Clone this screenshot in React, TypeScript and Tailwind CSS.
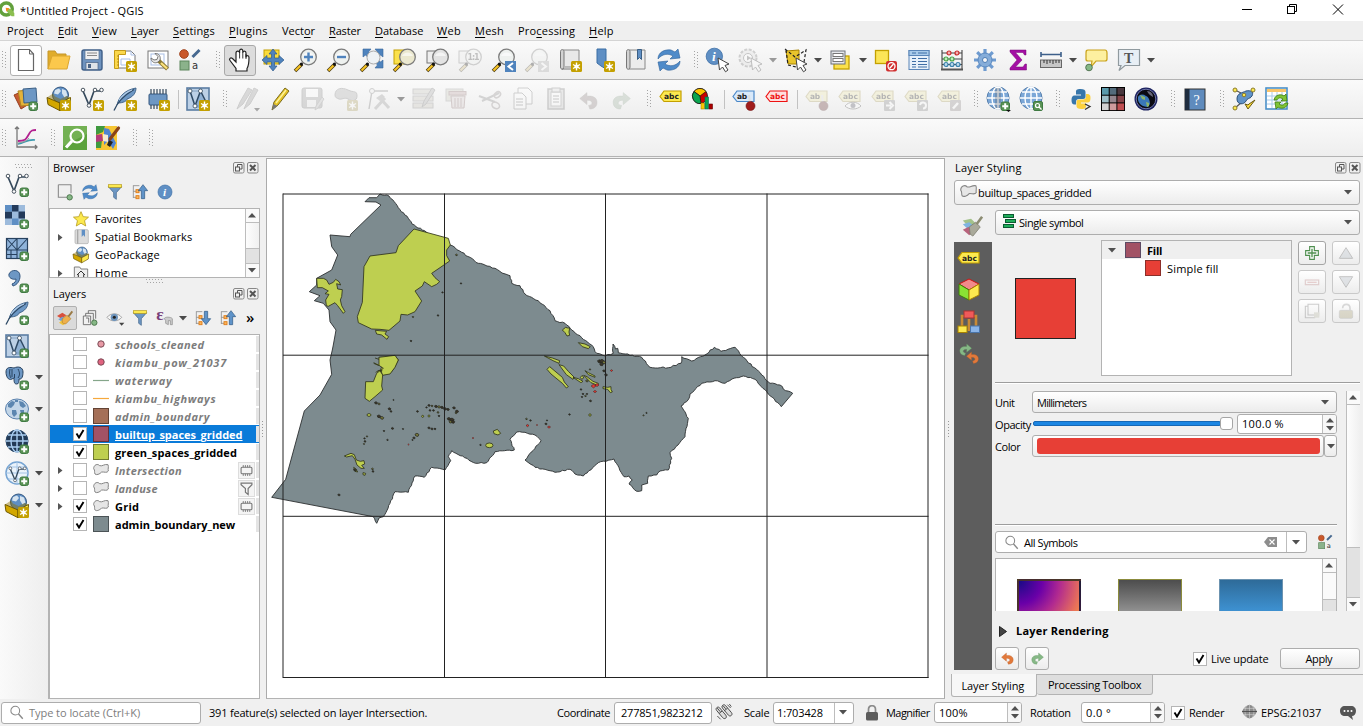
import { useLayoutEffect, useRef } from "react";
import type { ReactNode } from "react";

/* Text run fitted to a given width through letter spacing. */
function T({ w, children, className = "" }: { w: number; children: ReactNode; className?: string }) {
  const ref = useRef<HTMLSpanElement>(null);
  useLayoutEffect(() => {
    const el = ref.current;
    if (!el) return;
    el.style.letterSpacing = "0px";
    const n = (el.textContent || "").length || 1;
    el.style.letterSpacing = `${(w - el.offsetWidth) / n}px`;
  }, [w]);
  return (
    <span className="shrink-0 flex" style={{ width: w }}>
      <span ref={ref} className={`inline-block whitespace-pre ${className}`}>
        {children}
      </span>
    </span>
  );
}

function Ic({ children, s = 24, className = "" }: { children: ReactNode; s?: number; className?: string }) {
  return (
    <svg width={s} height={s} viewBox="0 0 24 24" fill="none" className={`shrink-0 overflow-visible ${className}`}>
      {children}
    </svg>
  );
}

/* ---------- shared icon fragments ---------- */
const Star = () => (
  <g>
    <rect x="13" y="13" width="11" height="11" rx="1.500" fill="#c4a000" />
    <path d="M18.500 14.500v8M15 16.500l7 4M22 16.500l-7 4" stroke="#fff" strokeWidth="1.400" />
    <circle cx="18.500" cy="18.500" r="2" fill="#fff" />
  </g>
);
const Plus = () => (
  <g>
    <rect x="15" y="15" width="8.500" height="8.500" rx="2" fill="#5a9355" stroke="#3f7a42" />
    <path d="M19.200 16.200v6M16.200 19.200h6" stroke="#fff" strokeWidth="2" />
  </g>
);
const Handle = () => (
  <g>
    <path d="M8 16L1 23" stroke="#4a3b10" strokeWidth="3.600" />
    <path d="M6.500 17.500L1.500 22.500" stroke="#f6c324" strokeWidth="2.200" />
    <circle cx="7.500" cy="16" r="1.500" fill="#111" />
  </g>
);
const Lens = ({ fill = "#eef1ef" }: { fill?: string }) => (
  <g>
    <Handle />
    <circle cx="14.500" cy="9" r="7.800" fill={fill} stroke="#7c7c7c" strokeWidth="1.300" />
    <path d="M9 8a6 6 0 0 1 11 0z" fill="#fff" opacity=".6" />
  </g>
);
const Cursor = () => <path d="M12 10l11 6-4 1.500 3 4.500-2.500 1.800-3-4.800-3 3z" fill="#fff" stroke="#444" strokeWidth="1" />;
const VNodes = () => (
  <g>
    <path d="M3 4l6 14 5-14h7" stroke="#35495c" strokeWidth="1.700" />
    <g fill="#fff" stroke="#4a5560" strokeWidth="1">
      <circle cx="3" cy="3" r="1.800" /><circle cx="9" cy="18.500" r="1.800" /><circle cx="15" cy="3" r="1.800" /><circle cx="21.500" cy="3" r="1.800" />
    </g>
  </g>
);
const Feather = () => (
  <g>
    <path d="M4 18C6 9 12 3 23 1c0 5-3 9-9 11 0 2-4 4-9 4" fill="#6d97c4" stroke="#3b5f85" strokeWidth=".9" />
    <path d="M1 23.500C4 16 10 9 21 2.500" stroke="#2e4a66" strokeWidth="1.300" />
    <path d="M6 13c3-4 7-8 13-10" stroke="#b7cfe8" strokeWidth="1.200" />
  </g>
);
const Box = () => (
  <g>
    <circle cx="13.500" cy="8" r="8" fill="#5f8fc4" stroke="#35577f" />
    <path d="M8 3l4-1.500 2 2.500-3 3.500-4-1zM15 2l4 1.500 1.500 5-3 2-2.500-4z" fill="#d5e3ef" />
    <path d="M0 10.500l6-4 2 3 5.500 2.500 6-3 4 1.500-10 6z" fill="#8c6e00" opacity=".45" />
    <path d="M0 10.500L13 16v7.700L1 17.500z" fill="#d3a700" stroke="#6f5800" />
    <path d="M13 16l10.500-5.500-.500 7.500L13 23.700z" fill="#fce94f" stroke="#6f5800" />
  </g>
);
const Globe = ({ dark = false }: { dark?: boolean }) => (
  <g>
    <circle cx="12" cy="11" r="11" fill={dark ? "#233a55" : "#7ba7d7"} stroke={dark ? "#2b4a6b" : "#5880ad"} />
    <path d="M12 0v22M1 11h22M3 5h18M3 17h18" stroke={dark ? "#a9cdf0" : "#fff"} strokeWidth="1.400" />
    <ellipse cx="12" cy="11" rx="6" ry="11" stroke={dark ? "#a9cdf0" : "#fff"} strokeWidth="1.400" />
  </g>
);
const Mesh = () => (
  <g>
    <rect x="1" y="1" width="22" height="22" fill="#bcd0e6" stroke="#5b7da3" strokeWidth="1.600" />
    <path d="M14 4l8 17H9z" fill="#8fb0d3" />
    <path d="M4 4l5 15 5.500-15L21 17" stroke="#2f4a66" strokeWidth="1.500" />
    <path d="M4 4l10 0M9 19h12" stroke="#7d9cbd" strokeWidth=".9" />
    <g fill="#fff" stroke="#35495c" strokeWidth=".8"><circle cx="4" cy="4" r="2" /><circle cx="14.500" cy="4" r="2" /><circle cx="9" cy="19" r="2" /></g>
  </g>
);
const Tag = ({ t = "abc", fill = "#fce94f", stroke = "#c4a000", color = "#222" }: { t?: string; fill?: string; stroke?: string; color?: string }) => (
  <g>
    <path d="M1 9.500L5 4h17v10.500H5z" fill={fill} stroke={stroke} strokeWidth="1.200" />
    <text x="5" y="12" fontSize="7.500" fontWeight="700" fontFamily="DejaVu Sans" fill={color} textLength={t.length > 2 ? 15 : 10}>{t}</text>
  </g>
);
const Pin = () => (
  <g>
    <path d="M17 8l1 9" stroke="#ddd" strokeWidth="2" />
    <circle cx="18.500" cy="19" r="4.500" fill="#a11d1d" stroke="#701010" strokeWidth=".6" />
  </g>
);
const RefreshG = () => (
  <g fill="#4f8bc9" stroke="#2b5f98" strokeWidth=".6">
    <path d="M1 11C1 4 8 1 14 2l4 2 3-3 2 9-10 1 3-3C11 5 5 6 1 11z" />
    <path d="M23 13c0 7-7 10-13 9l-4-2-3 3-2-9 10-1-3 3c5 3 11 2 15-3z" />
  </g>
);
const SymG = () => (
  <g>
    <circle cx="5" cy="6" r="4.300" fill="#c9582b" stroke="#a1451f" />
    <path d="M13.500 9l7-7" stroke="#46688f" strokeWidth="3" />
    <rect x="1" y="13" width="9" height="9" fill="#8bb28b" stroke="#5d865d" />
    <text x="13" y="21" fontSize="10" fill="#333" fontFamily="DejaVu Sans">a</text>
  </g>
);
const PageFold = () => (
  <g>
    <rect x="2" y="3" width="20" height="17" fill="#fff" stroke="#777" />
    <rect x="5" y="6" width="13" height="11" stroke="#a9bfe6" fill="none" />
  </g>
);
const FunnelG = () => (
  <g>
    <path d="M2 4h20l-8 9v10l-4-3v-7z" fill="#6d97c4" stroke="#3b5f85" />
    <rect x="2" y="1" width="20" height="4" fill="#fce94f" stroke="#b59a1c" />
  </g>
);
const InfoG = () => (
  <g>
    <circle cx="12" cy="12" r="10.500" fill="#5f8fc4" stroke="#3b6ea5" />
    <text x="9" y="18" fontSize="17" fontStyle="italic" fontWeight="700" fill="#fff" fontFamily="Liberation Serif">i</text>
  </g>
);
const TreeUp = ({ down = false }: { down?: boolean }) => (
  <g>
    <path d="M2 2v19M2 2.500h9M2 11h5M2 20h5" stroke="#888" strokeWidth="1.200" />
    <rect x="6" y="8.500" width="4.500" height="4.500" fill="#fbb55c" stroke="#e07f1c" strokeWidth="1.400" /><rect x="6" y="17.500" width="4.500" height="4.500" fill="#fbb55c" stroke="#e07f1c" strokeWidth="1.400" />
    <path d={down ? "M14 2h5v11h4.500l-7 9-7-9H14z" : "M14 22h5V10h4.500l-7-9-7 9H14z"} fill="#5f93c9" stroke="#2b5580" />
  </g>
);
const UndoG = ({ c = "#e2793b", s = "#b95b22" }: { c?: string; s?: string }) => (
  <path d="M1 9.500L10 2v4.500C18 5.500 23 9 22.500 15c-.500 5-4 7.500-9 7.500l-1.500-4.500c6 0 6-7-2-6.500V17z" fill={c} stroke={s} strokeWidth=".6" />
);
const RedoG = () => <g transform="matrix(-1 0 0 1 24 0)"><UndoG c="#86b886" s="#5b8f5b" /></g>;
const BrushG = () => (
  <g>
    <path d="M0 9l8-5 6 4-7 5z" fill="#d8503c" />
    <path d="M2 14l6-4 5 3-5 5z" fill="#6ea2d8" />
    <path d="M3 19l6-5 7 4-7 5z" fill="#f0c33c" />
    <path d="M8 13l7-5 6 5-8 8c-2 0-4-1-5-2z" fill="#eeb04c" stroke="#a97b2c" strokeWidth=".8" />
    <path d="M17 10l6-8" stroke="#9a7a45" strokeWidth="2.800" />
  </g>
);

/* ---------- toolbar parts ---------- */
const Dots = ({ first = false }: { first?: boolean }) => (
  <span className={first ? "w-[9.5px] shrink-0 flex justify-center" : "w-4 shrink-0 flex justify-center pl-[5px]"}>
    <svg width="5" height="18" className="shrink-0">
      {[0, 3, 6, 9, 12, 15].map((y) => (
        <g key={y} fill="#a5a5a5"><rect x="0" y={y} width="1" height="1" /><rect x="3" y={y + 1} width="1" height="1" /></g>
      ))}
    </svg>
  </span>
);
const Sep = () => <span className="w-[7px] shrink-0 flex justify-center"><span className="w-px h-[19px] bg-[#c2c2c2]" /></span>;
const Car = ({ dim = false }: { dim?: boolean }) => (
  <span className="w-3 shrink-0 flex justify-center pr-[2px]">
    <svg width="8" height="5" viewBox="0 0 8 5" className="shrink-0"><path d="M0 0h8L4 4.500z" fill={dim ? "#9a9a9a" : "#4a4a4a"} /></svg>
  </span>
);
function B({ children, off = false, box = "" }: { children: ReactNode; off?: boolean; box?: string }) {
  return (
    <span className="w-[33px] h-full shrink-0 flex items-center justify-center">
      <span className={`flex items-center justify-center w-8 h-[31px] rounded-[3px] ${box}`}>
        <Ic className={off ? "opacity-30 grayscale-[60%]" : ""}>{children}</Ic>
      </span>
    </span>
  );
}
const barCls = "h-[39px] flex items-center shrink-0 border-b border-[#b3b3b3] bg-linear-to-b from-[#fafafa] to-[#eeeeee]";

function Toolbar1() {
  return (
    <div className={barCls}>
      <Dots first />
      <B box="bg-white border border-[#b0b0b0]"><path d="M4.500 1.500h11l4 4.500v16.500h-15z" fill="#fff" stroke="#666" strokeWidth="1.200" /><path d="M15.500 1.500V6h4" stroke="#666" /></B>
      <B><path d="M1 21V3h7l2 3h9v4" fill="#e0ac2b" stroke="#c4952a" /><path d="M1 21l4-13h18l-3 13z" fill="#fbc84c" stroke="#dba62f" /></B>
      <B><rect x="2" y="2" width="20" height="20" rx="2" fill="#6f93bf" stroke="#3f5f88" strokeWidth="1.400" /><rect x="5" y="2.500" width="14" height="9" fill="#f1f1f1" stroke="#55708f" strokeWidth=".7" /><path d="M7 5h10M7 7.500h10" stroke="#888" /><rect x="6" y="14.500" width="12" height="7" fill="#dfe3e8" stroke="#4a6385" strokeWidth=".7" /><rect x="8" y="16" width="3" height="4" fill="#4a6385" /></B>
      <B><path d="M4 3h14l4 4v13H4z" fill="#fff" stroke="#777" /><path d="M18 3v4h4M8 11h9v6H8z" stroke="#a9bfe6" /><path d="M1.500 2.500h11v4h-7v14h-4z" fill="#fbd84c" stroke="#c49b17" /><path d="M4 8h2M4 11h2M4 14h2M4 17h2" stroke="#a87f0f" strokeWidth=".8" /><Star /></B>
      <B><PageFold /><path d="M12 12l9.500 9" stroke="#8d7a34" strokeWidth="4" /><path d="M15 15l6 5.500" stroke="#fbe27c" strokeWidth="2.200" /><path d="M9 5.500l3 3-1 3-3 .5-3-2c0 4 4 6 7 4l2-2c1-3-1-7-5-6.500z" fill="#e8e8e8" stroke="#777" /></B>
      <B><SymG /></B>
      <Dots />
      <B box="bg-[#dcdcdc] border border-[#a9a9a9]"><path d="M8 14L4.500 10.500c-2-1.300-3.800.3-2.500 2L8 20.500V23h11v-2.500c2-3 2-6 2-11 0-2.600-3-2.600-3 0V5c0-2.600-3.200-2.600-3.200 0V3c0-2.600-3.200-2.600-3.200 0v2c0-2.600-3.600-2.600-3.600 0z" fill="#fff" stroke="#222" strokeWidth="1.200" /><path d="M11.600 5v5.500M14.800 5v5.500M18 6v5" stroke="#222" strokeWidth=".9" /></B>
      <B><rect x="3" y="2" width="15" height="14" fill="#fbdc3c" stroke="#c4a000" /><path d="M12 1l4 5h-2.500v4H18V7.500l5 4.500-5 4.500V14h-4.500v4H16l-4 5-4-5h2.500v-4H6v2.500L1 12l5-4.500V10h4.500V6H8z" fill="#4f83bd" stroke="#2f5b8d" strokeWidth=".7" /></B>
      <B><Lens /><path d="M14.500 4.500v9M10 9h9" stroke="#4f83bd" strokeWidth="2.400" /></B>
      <B><Lens /><path d="M10 9h9" stroke="#4f83bd" strokeWidth="2.400" /></B>
      <B><path d="M3 1h8l-2.500 3 4 4-3 3-4-4L3 9zM23 1h-8l2.500 3-4 4 3 3 4-4L23 9zM23 20h-8l2.500-3-4-4 3-3 4 4 2.500-2z" fill="#4f83bd" stroke="#38669c" strokeWidth=".6" /><circle cx="13.500" cy="9.500" r="6.500" fill="#eef2f5" stroke="#aaa" /><Handle /></B>
      <B><rect x="1" y="2" width="11" height="14" fill="#fbe14c" stroke="#c4a000" /><Lens fill="#ebe8cf" /></B>
      <B><rect x="1" y="3" width="14" height="12" fill="#eee" stroke="#777" /><Lens fill="#e3e3e3" /></B>
      <B off><rect x="0" y="3" width="14" height="12" fill="#eee" stroke="#777" /><Lens /><text x="8.500" y="12" fontSize="8" fontWeight="700" fill="#444" fontFamily="DejaVu Sans" textLength="12">1:1</text></B>
      <B><Lens /><rect x="13" y="13" width="11" height="11" fill="#4f83bd" /><path d="M21 15l-4.500 3.500L21 22" stroke="#fff" strokeWidth="2" /></B>
      <B off><Lens /><rect x="13" y="13" width="11" height="11" fill="#aaa" /><path d="M16.500 15l4.500 3.500-4.500 3.500" stroke="#fff" strokeWidth="2" /></B>
      <B><path d="M5 2h16v17H7" fill="#e8e8e8" stroke="#888" /><path d="M2.500 3.500c0-2.500 3.500-2.500 3.500 0V19c0 3-3.500 3-3.500 0z" fill="#d2d2d2" stroke="#777" /><path d="M4 21h10" stroke="#777" /><Star /></B>
      <B><path d="M6 1h9v20l-5-3-4-3z" fill="#5f8fc4" stroke="#3b6ea5" /><Star /></B>
      <B><path d="M5 2h16v19H5" fill="#ececec" stroke="#888" /><path d="M2.500 3.500c0-2.500 3.500-2.500 3.500 0V19c0 3-3.500 3-3.500 0z" fill="#d2d2d2" stroke="#777" /><path d="M13.500 1.500h4v10l-2-2-2 2z" fill="#5f8fc4" stroke="#3b5f85" /></B>
      <B><RefreshG /></B>
      <Dots />
      <B><g transform="translate(-1 -1) scale(.78)"><InfoG /></g><Cursor /></B>
      <B off><circle cx="9" cy="10" r="8.500" fill="#ddd" stroke="#777" strokeWidth="2" strokeDasharray="3 1.500" /><circle cx="9" cy="10" r="4.500" fill="#fff" stroke="#555" /><path d="M8 7.500v5l4-2.500z" fill="#555" /><Cursor /></B>
      <Car dim />
      <B><path d="M2 3l13-1v14H4z" fill="#e8c52c" stroke="#a88200" /><path d="M1 1l10 8L22 2l-2 12M4 17l8 2M2 2l2 15" stroke="#222" strokeDasharray="3 2" strokeWidth="1.200" /><Cursor /></B>
      <Car />
      <B><rect x="5" y="8" width="15" height="13" fill="#fbe14c" stroke="#c4a000" strokeWidth="1.300" /><rect x="2" y="3" width="14" height="13" fill="#e6e8ec" stroke="#6c7078" /><rect x="4" y="5.500" width="10" height="3" fill="#fff" stroke="#777" /><rect x="4" y="10.500" width="10" height="3" fill="#fff" stroke="#777" /></B>
      <Car />
      <B><rect x="1.500" y="2.500" width="13" height="13" fill="#fce557" stroke="#c4a000" strokeWidth="1.300" /><rect x="12" y="13" width="11" height="10.500" rx="2" fill="#d12f2f" /><circle cx="17.500" cy="18.200" r="3.500" stroke="#fff" strokeWidth="1.300" /><path d="M15.500 20.500l4-4.500" stroke="#fff" strokeWidth="1.300" /></B>
      <B><rect x="2" y="2.500" width="20" height="19" fill="#e8f1fa" stroke="#5b86b8" /><rect x="2" y="2.500" width="20" height="5" fill="#a9cbea" stroke="#5b86b8" /><path d="M5 10.500h4M11 10.500h9M5 13.500h4M11 13.500h9M5 16.500h4M11 16.500h9M5 19h4M11 19h9M5 5h4M11 5h9" stroke="#3f6ea5" /></B>
      <B><path d="M2 2v19M22 2v19M2 5h20M2 11h20M2 16.500h20" stroke="#444" strokeWidth="1.100" /><path d="M1 21.500h22" stroke="#555" strokeWidth="2" /><g strokeWidth="1.200"><g fill="#f2b0b0" stroke="#cc2b2b"><circle cx="9" cy="5" r="2" /><circle cx="17" cy="5" r="2" /></g><g fill="#bdeabd" stroke="#4aa64a"><circle cx="6" cy="11" r="2" /><circle cx="12" cy="11" r="2" /></g><g fill="#bdd9ea" stroke="#3a82ad"><circle cx="6" cy="16.500" r="2" /><circle cx="12" cy="16.500" r="2" /><circle cx="18" cy="16.500" r="2" /></g></g></B>
      <B><g stroke="#6e9bd0" strokeWidth="3.200"><path d="M12 1v22M1 12h22M4.200 4.200l15.600 15.600M19.800 4.200L4.200 19.800" /></g><circle cx="12" cy="12" r="7" fill="#86add9" stroke="#5a89c0" /><circle cx="12" cy="12" r="2.500" fill="#f7f7f7" stroke="#4d7db5" /></B>
      <B><path d="M4 2h16v5h-1.500L17 4.500H9.500L16 12l-6.500 7H17l2-3h1.500v6H4v-2l7-8-7-8z" fill="#a40ea4" stroke="#760976" strokeWidth=".5" /></B>
      <B><path d="M2 6.500h20M2 4v5M22 4v5" stroke="#3d5f8a" strokeWidth="1.600" /><rect x="1.500" y="12" width="21" height="7.500" fill="#c6c6c6" stroke="#666" /><path d="M5 12v3M8 12v4M11 12v3M14 12v4M17 12v3M20 12v3" stroke="#333" /></B>
      <Car />
      <B><path d="M4 2h17c2 0 2 1 2 3v6c0 2-1 2-2 2h-9l-5 6 1-6H4c-2 0-2-1-2-2V5c0-2 0-3 2-3z" fill="#fdf0a0" stroke="#c9a21a" strokeWidth="1.200" /><circle cx="5" cy="19.500" r="3.300" fill="#86b886" stroke="#557755" /></B>
      <B><path d="M1.500 1.500h21v16H8l-6 5 2-5H1.500z" fill="#e8eff5" stroke="#909a9f" strokeWidth="1.200" /><text x="7" y="14.500" fontSize="14" fontWeight="700" fill="#555" fontFamily="Liberation Serif">T</text></B>
      <Car />
    </div>
  );
}

function Toolbar2() {
  return (
    <div className={barCls}>
      <Dots first />
      <B><path d="M0 8l9-4 6 13-8 5z" fill="#c75b32" stroke="#96401f" /><path d="M4 4l12-1 2 15-11 1z" fill="#e3b23a" stroke="#b08420" /><path d="M9 2l13-1 1 14-13 1z" fill="#6d97c4" stroke="#3b5f85" /><Plus /></B>
      <B><Box /><Star /></B>
      <B><VNodes /><Star /></B>
      <B><Feather /><Star /></B>
      <B><rect x="3" y="7" width="18" height="11" rx="1" fill="#6d97c4" stroke="#35577f" /><path d="M5 2v5M8 2v5M11 2v5M14 2v5M17 2v5M20 2v5M5 18v4M8 18v4M11 18v4" stroke="#35495c" strokeWidth="1.200" /><Star /></B>
      <Sep />
      <B><Mesh /><Star /></B>
      <Dots />
      <B off><path d="M2 22l3-7L13 1l4 2-9 14zM9 22l3-7L19 1l4 2-8 14z" fill="#999" stroke="#777" /><path d="M19 21h6l-3 3.500z" fill="#000" /></B>
      <B><path d="M4 23l2-8L17 1l4 3-11 14z" fill="#e5c326" stroke="#7a6a1c" /><path d="M8 16L18 3" stroke="#fdf39b" strokeWidth="1.500" /><path d="M4 23l1.500-6 4 2z" fill="#777" /></B>
      <B off><rect x="1" y="1" width="20" height="20" rx="2" fill="#999" stroke="#777" /><rect x="5" y="2" width="12" height="8" fill="#fff" /><rect x="6" y="13" width="9" height="7" fill="#eee" /><path d="M14 23l1-4 6-9 2 2-6 9z" fill="#bbb" stroke="#888" /></B>
      <B off><path d="M1 8C1 1 8 0 14 3s9 0 9 6-6 5-9 3-7 1-9 0-4-1-4-4z" fill="#aaa" stroke="#777" /><Star /></B>
      <B off><path d="M2 22L5 4l16 0" stroke="#777" strokeWidth="1.400" /><circle cx="5" cy="4" r="2.500" fill="#eee" stroke="#777" /><path d="M8 22L18 11M12 10l10 11" stroke="#999" strokeWidth="3" /><path d="M9 11l6-4 3 3-5 4z" fill="#999" /></B>
      <Car dim />
      <B off><rect x="1" y="2" width="20" height="5" fill="#cdc5ae" stroke="#888" /><rect x="1" y="9" width="20" height="5" fill="#cdc5ae" stroke="#888" /><rect x="1" y="16" width="20" height="5" fill="#cdc5ae" stroke="#888" /><path d="M10 20l2-6 8-13 3 2-9 14z" fill="#aaa" stroke="#777" /></B>
      <B off><rect x="1" y="2" width="17" height="12" fill="#cca" stroke="#999" /><rect x="4" y="4.500" width="17" height="3.500" fill="#d99" stroke="#a66" /><path d="M6 9h14l-1 12H7z" fill="#e3caca" stroke="#a66" /><path d="M10 11v9M13 11v9M16 11v9" stroke="#a66" /></B>
      <B off><path d="M1 9l16 6M4 14L21 6" stroke="#888" strokeWidth="2" /><ellipse cx="18" cy="18.500" rx="4" ry="3" stroke="#988" strokeWidth="1.600" transform="rotate(30 18 18)" /><ellipse cx="19.500" cy="8" rx="3.500" ry="2.500" stroke="#988" strokeWidth="1.600" transform="rotate(-40 19 8)" /></B>
      <B off><path d="M7 1h10l4 4v12H7z" fill="#fff" stroke="#777" /><path d="M3 6h8l4 4v12H3z" fill="#fff" stroke="#777" /><path d="M5 12h7M5 15h7M5 18h7" stroke="#666" /></B>
      <B off><rect x="4" y="2" width="16" height="20" fill="#ccc" stroke="#777" strokeWidth="1.500" /><rect x="7" y="5" width="10" height="14" fill="#fff" stroke="#888" /><rect x="8" y="1" width="8" height="4" fill="#ddd" stroke="#777" /><path d="M9 9h6M9 12h6M9 15h6" stroke="#666" /></B>
      <B off><g transform="translate(2 4) scale(.8)"><UndoG c="#a08080" s="#776" /></g></B>
      <B off><g transform="translate(2 4) scale(.8)"><RedoG /></g></B>
      <Dots />
      <B><Tag /></B>
      <B><circle cx="8" cy="9" r="7.500" fill="#c00" stroke="#111" strokeWidth=".8" /><path d="M8 9L2 4.500A7.500 7.500 0 0 1 14 4.500z" fill="#fbc500" stroke="#111" strokeWidth=".7" /><path d="M8 9L2 4.500A7.500 7.500 0 0 0 9 16.500z" fill="#0aa550" stroke="#111" strokeWidth=".7" /><rect x="9" y="16" width="3.500" height="6" fill="#fbc500" stroke="#a88200" strokeWidth=".6" /><rect x="13" y="10" width="3.500" height="12" fill="#0aa550" stroke="#066" strokeWidth=".6" /><rect x="17" y="17" width="3.500" height="5" fill="#a00" stroke="#600" strokeWidth=".6" /></B>
      <Sep />
      <B><Tag t="ab" fill="#d9e9fa" stroke="#4a88c8" /><Pin /></B>
      <B><Tag fill="#fdd" stroke="#e11" color="#e11" /></B>
      <Sep />
      <B off><Tag t="ab" /><Pin /></B>
      <B off><Tag /><path d="M7 19c4-5 12-5 16 0-4 4-12 4-16 0z" fill="#fff" stroke="#555" /><circle cx="15" cy="18.500" r="2.500" fill="#557" /></B>
      <B off><Tag /><rect x="13" y="13" width="11" height="11" rx="1" fill="#888" /><path d="M15 18.500h5M18.500 15l3.500 3.500-3.500 3.500" stroke="#fff" strokeWidth="2" /></B>
      <B off><Tag /><rect x="13" y="13" width="11" height="11" rx="1" fill="#888" /><path d="M16 18a3 3 0 1 1 3 3.500" stroke="#fff" strokeWidth="2" /></B>
      <B off><Tag /><rect x="13" y="13" width="11" height="11" rx="1" fill="#988" /><path d="M16 21.500l5-5.500" stroke="#fff" strokeWidth="2.500" /></B>
      <Dots />
      <B><Globe /><path d="M9 1h6v20H9z" fill="#555" opacity=".25" /><Plus /><path d="M20 23h5l-2.500 2z" fill="#111" /></B>
      <B><Globe /><rect x="14.500" y="14.500" width="9" height="9" rx="1.500" fill="#5a9355" stroke="#3f7a42" /><circle cx="18.500" cy="18.500" r="2" stroke="#fff" strokeWidth="1.200" /><path d="M20 20l2.500 2.500" stroke="#fff" strokeWidth="1.300" /></B>
      <Dots />
      <B><g transform="translate(1.500 0)"><path d="M11 2c-4 0-4.500 1-4.500 3v2.500h5v1H5c-2 0-3 1.500-3 4.500s1 4.500 3 4.500h1.500v-2.500c0-2 1-3 3-3h4c2 0 2.500-1 2.500-2.500V5c0-2-1.500-3-5-3z" fill="#3776ab" /><path d="M12 22c4 0 4.500-1 4.500-3v-2.500h-5v-1H18c2 0 3-1.500 3-4.500s-1-4-3-4h-1.500v2.500c0 2-1 3-3 3h-4c-2 0-2.500 1-2.500 2.500V19c0 2 1.500 3 5 3z" fill="#fcd13e" /></g><path d="M17 17l5 2.500-5 3" stroke="#333" strokeWidth="1.300" /></B>
      <B><rect width="24" height="24" fill="#000" />{["#5a9aab", "#536b7b", "#49373e", "#9dbfc8", "#94858d", "#874449", "#d1d1d1", "#cf9b9d", "#c04f52"].map((c, i) => <rect key={c} x={1 + (i % 3) * 7.7} y={1 + Math.floor(i / 3) * 7.7} width="6.700" height="6.700" fill={c} />)}</B>
      <B><circle cx="12" cy="12" r="11.500" fill="#1c2260" /><circle cx="12" cy="12" r="9.800" fill="#0a0a12" stroke="#6d74a8" /><path d="M4 10c2-3 5-3 8-1 3 1 4 5 4 8l-2 3C8 20 3 16 4 10z" fill="#3b78b8" /><path d="M6 8l5 2 0 3-3-1zM12 15l3 1v3l-2 1z" fill="#8db56a" /><path d="M13 4c4 0 6 3 6 6-2-1-5-3-6-6z" fill="#8f8fa6" opacity=".7" /></B>
      <Dots />
      <B><rect x="2" y="2" width="20" height="21" fill="#5f8bbd" stroke="#333" /><rect x="2" y="2" width="4.500" height="21" fill="#1e2c3e" /><text x="10.500" y="17.500" fontSize="14" fill="#fff" fontFamily="Liberation Serif">?</text></B>
      <Dots />
      <B><path d="M3 3l6 3M21 3l-3 8M3 21l7-6" stroke="#555" strokeWidth="1.200" /><path d="M5 12c0-6 5-6 9-8 5-1 8 1 6 5-2 3-5 2-6 5-2 4-9 4-9-2z" fill="#6193c7" stroke="#2d517a" /><g fill="#fce94f" stroke="#8a7a2c"><circle cx="3" cy="3" r="2" /><circle cx="21" cy="3" r="2" /><circle cx="3" cy="21" r="2" /><circle cx="12" cy="8" r="1.800" /></g><path d="M13 17l3 5 7-9-6 4-1 1z" fill="#fbdc3c" stroke="#6a5a10" /></B>
      <B><rect x="1" y="1" width="21" height="21" fill="#fff" stroke="#4a90c8" strokeWidth="1.600" /><rect x="2" y="2" width="19" height="3" fill="#f9c56b" /><path d="M2 9h19M2 13h19M2 17h19M7 5v16M12 5v16M17 5v16" stroke="#a9cbea" /><path d="M9 13c1-6 8-6 10-4l2-2 1 7h-6l2-2c-3-2-5-1-6 1zM23 16c-1 6-8 6-10 4l-2 2-1-7h6l-2 2c3 2 5 1 6-1z" fill="#7fc435" stroke="#3e7d12" strokeWidth=".8" /></B>
    </div>
  );
}

function Toolbar3() {
  return (
    <div className="h-[38px] flex items-center shrink-0 border-b border-[#b3b3b3] bg-linear-to-b from-[#fafafa] to-[#eeeeee]">
      <Dots first />
      <B><path d="M3 1v20h20M1 3l2-2 2 2M21 19l2 2-2 2" stroke="#777" strokeWidth="1.300" /><path d="M4 15c8 0 8-2 11-7 2-4 4-4 7-4" stroke="#b2218f" strokeWidth="1.800" /><path d="M4 18c7-1 9-5 17-4" stroke="#3a9aae" strokeWidth="1.600" /><path d="M4 17c6-1 9-2 11-5" stroke="#999" /></B>
      <Dots />
      <B><rect width="24" height="24" fill="#5ba23c" /><path d="M0 0h24v8L0 20z" fill="#83bb62" opacity=".6" /><circle cx="14" cy="10" r="6.500" stroke="#fff" strokeWidth="2.200" /><path d="M9 15l-6 6.500" stroke="#fff" strokeWidth="3.200" /></B>
      <B><rect width="21" height="24" fill="#f6c634" /><path d="M0 0h9l-2 6-7 3zM0 13l6 1-1 8H0z" fill="#3f9a3f" /><path d="M8 2l5 1 7 14-3 6-5-8-4 4z" fill="#4f83d1" /><path d="M0 9l6-1 1 7-7 1z" fill="#b53a7a" /><path d="M7 8l5 1v7l-5-1z" fill="#f5ead2" /><path d="M11 19l2-5 4 2-3 5z" fill="#222" /><path d="M14 13l8.500-11" stroke="#8a4318" strokeWidth="3.200" strokeLinecap="round" /></B>
      <Dots /><Dots />
    </div>
  );
}

function SideBar() {
  const items: [ReactNode, boolean][] = [
    [<><VNodes /><Plus /></>, false],
    [<><rect x="0" y="0" width="20" height="20" fill="#9dbbdc" /><g fill="#233a5a"><rect x="7" y="0" width="6.500" height="6.500" /><rect x="0" y="6.500" width="7" height="7" /><rect x="13.500" y="6.500" width="6.500" height="7" /></g><g fill="#5f8fc4"><rect x="0" y="0" width="7" height="6.500" /><rect x="7" y="13.500" width="6.500" height="6.500" /></g><Plus /></>, false],
    [<><rect x="1.500" y="1.500" width="21" height="20" fill="#8fb3da" stroke="#28425f" strokeWidth="1.200" /><path d="M1.500 13h21M12 1.500v20M1.500 1.500L12 13M12 1.500L1.500 13M12 13L22.500 1.500M1.500 17.500H12M6 13v8" stroke="#28425f" strokeWidth="1.100" /><Plus /></>, false],
    [<><path d="M4 5c2-5 11-5 11 2 0 5-3 9-7 10l-1-2c3-1 4-3 4-5-3 1-8-1-7-5z" fill="#6d97c4" stroke="#35577f" /><Plus /></>, false],
    [<><Feather /><Plus /></>, false],
    [<><Mesh /><Plus /></>, false],
    [<><path d="M1 6c0-5 4-5 8-4 4-2 9-1 9 4 0 4-1 7-3 7h-1c0 3 0 5-2.500 5S9 15 9 12l-2 1c-4 2-6-3-6-7z" fill="#6d97c4" stroke="#28425f" /><path d="M5 3c-1 4 0 8 1 9M13 3c2 4 2 6 0 9M9.500 8v4M7 3v8" stroke="#28425f" /><Plus /></>, true],
    [<><ellipse cx="12" cy="11" rx="11.500" ry="10" fill="#c3d6e8" stroke="#5880ad" /><path d="M3 6l4-3 3 1-1 3-3 3-3-1zM14 3l4 1 3 4-3 2-3-2zM7 12l4 0 1 4-3 3-2-3zM15 12l4 0 0 3-3 1zM10 2h3v2h-3z" fill="#5c86b0" /><Plus /></>, true],
    [<><Globe dark /><Plus /></>, false],
    [<><circle cx="12" cy="11" r="11" fill="#eaf3fb" stroke="#77a5d3" strokeWidth="1.500" /><path d="M12 0v22M1 11h22M3 5h18M3 17h18" stroke="#9dc0e3" strokeWidth=".9" /><g transform="translate(3 4) scale(.78)"><VNodes /></g><Plus /></>, true],
    [<><Box /><Star /></>, true],
  ];
  return (
    <div className="w-[49px] shrink-0 border-r border-[#b3b3b3] bg-linear-to-r from-[#fafafa] to-[#eeeeee] flex flex-col">
      <div className="h-3 flex items-end justify-center pb-[1px]"><HDots /></div>
      {items.map(([n, c], i) => (
        <div key={i} className="h-[32.1px] flex items-center pl-[5px] gap-[5px]">
          <Ic>{n}</Ic>
          {c && <Car />}
        </div>
      ))}
    </div>
  );
}
const HDots = () => (
  <svg width="18" height="4">{[0, 3, 6, 9, 12, 15].map((x) => <g key={x} fill="#a5a5a5"><rect x={x} y="0" width="1" height="1" /><rect x={x + 1} y="3" width="1" height="1" /></g>)}</svg>
);
const VDots = () => (
  <svg width="4" height="18">{[0, 3, 6, 9, 12, 15].map((y) => <rect key={y} x="1" y={y} width="1" height="1" fill="#999" />)}</svg>
);

function DockTitle({ t, w }: { t: string; w: number }) {
  return (
    <div className="h-[22px] shrink-0 flex items-center pl-1 pr-[2px]">
      <T w={w}>{t}</T>
      <span className="flex-1" />
      <svg width="26" height="12" viewBox="0 0 26 12" fill="none" stroke="#555">
        <rect x=".5" y=".5" width="10.500" height="10.500" rx="1.500" stroke="#888" /><rect x="2.500" y="5" width="4" height="4" /><path d="M4.500 5V2.500H9V7H6.500" />
        <rect x="14.500" y=".5" width="10.500" height="10.500" rx="1.500" stroke="#888" /><path d="M17 3l5.500 5.500M22.500 3L17 8.500" strokeWidth="2" />
      </svg>
    </div>
  );
}
const TriR = () => <svg width="5" height="7" viewBox="0 0 5 7"><path d="M0 0l4.500 3.500L0 7z" fill="#555" /></svg>;
const Arrow = ({ up = false }: { up?: boolean }) => (
  <svg width="8" height="5" viewBox="0 0 8 5" className="shrink-0"><path d={up ? "M0 4.500h8L4 0z" : "M0 0h8L4 4.500z"} fill="#505050" /></svg>
);
function Scroll({ thumb, cls }: { thumb: string; cls: string }) {
  return (
    <div className={`shrink-0 flex flex-col bg-[#e2e2e2] border-l border-[#bdbdbd] ${cls}`}>
      <div className="h-[14px] shrink-0 bg-[#fafafa] border-b border-[#bdbdbd] flex items-center justify-center pr-px"><Arrow up /></div>
      <div className={`bg-linear-to-r from-[#fdfdfd] to-[#f0f0f0] border-b border-[#bdbdbd] ${thumb}`} />
      <div className="flex-1" />
      <div className="h-[14px] shrink-0 bg-[#fafafa] border-t border-[#bdbdbd] flex items-center justify-center pr-px"><Arrow /></div>
    </div>
  );
}
const PolyG = () => <path d="M1 10C1 4 7 2 10 5.500 14 7 17 2.500 22.500 4c1.500 4-.5 6 .5 9.500-2 3.500-6 1-10 1.500-3 3.500-8 5-10 3-1.500-3 .5-5-2-8z" fill="#e6e6e6" stroke="#858585" strokeWidth="1.500" />;

function BrowserDock() {
  return (
    <>
      <DockTitle t="Browser" w={42} />
      <div className="h-[26px] mb-[3px] flex items-center shrink-0 pl-[8px] gap-[9px]">
        <Ic s={16}><path d="M2 1h19v13M2 1v19h13" stroke="#888" strokeWidth="1.600" /><circle cx="19" cy="20" r="4" fill="#86b886" stroke="#4f7a4f" strokeWidth="1.500" /></Ic>
        <Ic s={16}><RefreshG /></Ic>
        <Ic s={16}><FunnelG /></Ic>
        <Ic s={16}><TreeUp /></Ic>
        <Ic s={16}><InfoG /></Ic>
      </div>
      <div className="h-[70px] w-[211px] shrink-0 border border-[#b3b3b3] bg-white flex overflow-hidden">
        <div className="flex-1 pt-px overflow-hidden">
          {([
            ["Favorites", 47, false, <path d="M12 1l3.300 7.500 8 .7-6 5.300 1.800 8L12 18.300 4.900 22.500l1.800-8-6-5.300 8-.7z" fill="#fce94f" stroke="#b59a1c" strokeWidth="1.200" />],
            ["Spatial Bookmarks", 97, true, <><rect x="3" y="1" width="20" height="21" rx="2" fill="#dcdcdc" stroke="#aaa" /><path d="M7 1v21" stroke="#aaa" strokeWidth="2" /><path d="M13 1h5v11l-2.500-3L13 12z" fill="#5f8fc4" /></>],
            ["GeoPackage", 65, false, <Box />],
            ["Home", 33, true, <><path d="M2 3h8l2 3h10v17H2z" fill="#eee" stroke="#777" strokeWidth="1.400" /><path d="M6 15l6-6 6 6M8 14v7h8v-7" stroke="#333" strokeWidth="1.500" /></>],
          ] as [string, number, boolean, ReactNode][]).map(([t, w, a, ic]) => (
            <div key={t} className="h-[18px] flex items-center pl-[8px]">
              <span className="w-[15px] flex">{a && <TriR />}</span>
              <Ic s={16}>{ic}</Ic>
              <span className="w-[6px]" />
              <T w={w}>{t}</T>
            </div>
          ))}
        </div>
        <Scroll cls="w-[14px]" thumb="h-[26px]" />
      </div>
      <div className="h-[5px] shrink-0 flex items-center justify-center pr-[1px]"><HDots /></div>
    </>
  );
}

type Row = { t: string; w: number; on?: boolean; tri?: boolean; kind: string; end?: string; sel?: boolean };
const rows: Row[] = [
  { t: "schools_cleaned", w: 89, kind: "p1" },
  { t: "kiambu_pow_21037", w: 112, kind: "p2" },
  { t: "waterway", w: 57, kind: "l1" },
  { t: "kiambu_highways", w: 101, kind: "l2" },
  { t: "admin_boundary", w: 95, kind: "#a57058" },
  { t: "builtup_spaces_gridded", w: 128, kind: "#a25265", on: true, sel: true },
  { t: "green_spaces_gridded", w: 122, kind: "#becf50", on: true },
  { t: "Intersection", w: 67, kind: "poly", tri: true, end: "chip" },
  { t: "landuse", w: 43, kind: "poly", tri: true, end: "fun" },
  { t: "Grid", w: 24, kind: "poly", tri: true, on: true, end: "chip" },
  { t: "admin_boundary_new", w: 120, kind: "#7d8b8f", on: true },
];
const Check = ({ on = false }: { on?: boolean }) => (
  <span className="w-[14px] h-[14px] shrink-0 bg-white border border-[#b5b5b5] flex items-center justify-center">
    {on && <svg width="10" height="10" viewBox="0 0 10 10"><path d="M1.500 4.500l2.500 4L8.500 1" stroke="#000" strokeWidth="1.900" fill="none" /></svg>}
  </span>
);
function LayerSym({ k }: { k: string }) {
  if (k === "p1" || k === "p2") return <svg width="16" height="16"><circle cx="8" cy="8" r="3.200" fill={k === "p1" ? "#e89aa5" : "#e0627f"} stroke="#7a4a55" /></svg>;
  if (k === "l1" || k === "l2") return <svg width="16" height="16"><path d="M0 8.500h16" stroke={k === "l1" ? "#85a68a" : "#f6a83c"} strokeWidth="1.200" /></svg>;
  if (k === "poly") return <Ic s={16}><PolyG /></Ic>;
  return <span className="w-4 h-4 border border-black/40" style={{ backgroundColor: k }} />;
}
function LayersDock() {
  return (
    <>
      <DockTitle t="Layers" w={33} />
      <div className="h-[26px] mb-[3px] flex items-center shrink-0 pl-[4px]">
        <span className="w-6 h-6 rounded-[2px] border border-[#b0b0b0] bg-[#dadada] flex items-center justify-center"><Ic s={16}><BrushG /></Ic></span>
        <span className="w-[25px] pl-[5px]"><Ic s={16}><path d="M2 9h11v13H2zM5.500 9V5H17v11M9.500 5V1h11v12M6 12h4v7" stroke="#666" strokeWidth="1.300" /><circle cx="18.500" cy="19" r="4" fill="#86b886" stroke="#4f7a4f" strokeWidth="1.500" /></Ic></span>
        <span className="w-[25px] pl-[5px]"><Ic s={16}><path d="M0 11C5 4 17 4 22 11c-5 7-17 7-22 0z" fill="#f5f5f5" stroke="#999" strokeWidth="1.300" /><circle cx="11" cy="11" r="5.500" fill="#6d94bd" /><circle cx="11" cy="11" r="2.300" fill="#222" /><path d="M18 19h8l-4 4.500z" fill="#444" /></Ic></span>
        <span className="w-[25px] pl-[5px]"><Ic s={16}><FunnelG /></Ic></span>
        <span className="w-[24px] pl-[5px]"><Ic s={16}><text x="-1" y="15" fontSize="26" fontWeight="700" fontFamily="Liberation Serif" fill="#77407a">ε</text><path d="M11 13c0-3 10-3 12 0v9h-3v-6h-3v6l-4-2v-4z" fill="#ccc" stroke="#888" /></Ic></span>
        <span className="w-[16px] pl-[2px]"><Car /></span>
        <span className="w-[25px] pl-[3px]"><Ic s={16}><TreeUp down /></Ic></span>
        <span className="w-[22px] pl-[3px]"><Ic s={16}><TreeUp /></Ic></span>
        <span className="pl-[7px] pb-[2px] text-[15px] leading-4 font-semibold">»</span>
      </div>
      <div className="flex-1 w-[211px] border border-[#b3b3b3] bg-white">
        {rows.map((r) => (
          <div key={r.t} className={`h-[18px] flex items-center pl-[8px] ${r.sel ? "bg-[#0a7bd9] text-white" : r.on ? "text-black" : "text-[#7c7c7c]"}`}>
            <span className="w-[15px] flex">{r.tri && <TriR />}</span>
            <Check on={r.on} />
            <span className="w-[6px]" />
            <LayerSym k={r.kind} />
            <span className="w-[6px]" />
            <T w={r.w} className={`mt-[2px] font-bold ${r.on ? "" : "italic"} ${r.sel ? "underline" : ""}`}>{r.t}</T>
            <span className="flex-1" />
            {r.end && (
              <span className="w-[17px] h-[17px] mr-px border border-[#ddd] bg-[#f4f4f4] flex items-center justify-center">
                <Ic s={13}>{r.end === "chip" ? <><rect x="2" y="6" width="20" height="12" rx="2" stroke="#777" strokeWidth="2" /><path d="M6 2v4M10 2v4M14 2v4M18 2v4M6 18v4M10 18v4M14 18v4M18 18v4" stroke="#777" strokeWidth="1.700" /></> : <path d="M2 2h20v3l-7 7v11l-5-4v-7L2 5z" stroke="#777" strokeWidth="2.200" />}</Ic>
              </span>
            )}
            <span className="w-[3px] h-4 bg-[#e4e4e4]" />
          </div>
        ))}
      </div>
    </>
  );
}

/* ---------- map ---------- */
type P = [number, number];
function jag(pts: P[], amp: number): P[] {
  const out: P[] = [];
  for (let i = 0; i < pts.length - 1; i++) {
    const [x0, y0] = pts[i];
    const [x1, y1] = pts[i + 1];
    const d = Math.hypot(x1 - x0, y1 - y0);
    const n = Math.max(1, Math.round(d / 2.5));
    out.push([x0, y0]);
    for (let k = 1; k < n; k++) {
      const o = Math.sin((i * 7 + k) * 12.9898 * (k + 1)) * amp;
      out.push([x0 + ((x1 - x0) * k) / n - ((y1 - y0) / d) * o, y0 + ((y1 - y0) * k) / n + ((x1 - x0) / d) * o]);
    }
  }
  out.push(pts[pts.length - 1]);
  return out;
}
const northEast: P[] = [[380, 194], [389, 196], [398.3, 207.7], [408.3, 218.3], [412, 224], [422.3, 230], [450.3, 245], [461.7, 252.3], [478.3, 263.3], [487, 266], [495, 268.3], [502, 273], [508, 275], [510, 275.7], [511.7, 283.3], [520, 285.7], [525, 294], [538.3, 300.7], [550, 310.7], [555, 320.7], [565, 323.3], [571.7, 330], [591.7, 345], [596.7, 353.3], [605, 356], [613.3, 353.3], [613, 344], [615.5, 349], [617.7, 348.3], [618.3, 352.7], [641.7, 357.3], [650, 367.3], [668.3, 367.7], [681, 363.3], [681.7, 356.7], [691.7, 361], [705, 355], [714.3, 347.3], [721, 351.3], [735, 347.3], [743.3, 357.3], [761.7, 375], [770, 383.3], [780, 385], [785.7, 390.7], [792.7, 393.3]];
const south: P[] = [[781.3, 406.7], [766.7, 391.7], [755, 379.3], [743.3, 376], [732, 379], [725, 383.3], [715, 380.7], [701.7, 383.3], [690, 394], [688, 400], [681, 406], [688.3, 418.3], [685, 436.7], [678, 445], [670, 452.7], [671.7, 458.3], [668.3, 470], [660, 471], [656.7, 475], [648.3, 476], [647.7, 483.3], [641.7, 485], [641.7, 490.7], [636.7, 491.3], [629, 484], [632.3, 480], [629, 476], [624, 476.7], [614, 459], [598.3, 462.7], [583.3, 476], [575, 474], [570, 469.3], [555, 472.3], [535, 467.3], [525, 460], [541, 440.7], [535, 435], [525, 432.3], [516.7, 432], [510, 439.3], [514.3, 450], [495, 451.7], [486.7, 462.7], [475.7, 463.3], [451.7, 450.7], [448.3, 456.7], [450.7, 460.7], [445, 470], [431.7, 467.3], [424.3, 477.3], [415, 476], [408.3, 492.3], [395, 491.7], [390, 503.3], [383.3, 516.7], [379, 518], [376.7, 523.3], [373.3, 516.7]];
const west: P[] = [[271.7, 497.3], [285.7, 479.3], [304.3, 411], [320, 395], [331.7, 374.3], [330, 360], [332.3, 350], [333.3, 345], [336, 330], [330, 321.7], [329, 310], [323.3, 303.3], [314.3, 300.7], [320, 295.7], [309.3, 291.7], [316.7, 285], [316.7, 278.3], [331.7, 270], [337.7, 255], [331.7, 246.7], [330, 235], [350, 236.7], [350.7, 234.3], [381, 205], [376, 202], [365, 201.7], [369, 197.7], [376.7, 197.7]];
const outline = [...jag(northEast, 0.6), ...jag(south, 0.5), ...west].map((p) => p.join(",")).join(" ");

/* Small built-up patches: x, y, radius. */
const specks: [number, number, number][] = [
  [456.5, 255, 1], [461, 283.5, .8], [442.5, 292.5, .8], [438, 315.5, .9], [413, 317, .8], [411, 341, .9], [393.5, 400, .6], [376, 403, 1.5], [379, 404, 1.2], [389.5, 409, 1.4], [391, 411.5, 1], [379, 416.5, 1.8], [382, 418, 1.8], [392.5, 428.5, 1.2], [403, 429, .7], [384, 431, .8], [367, 436.5, .8], [364.5, 438.5, .8], [365, 441.5, 1], [387.5, 440, .8], [364, 444, .7], [417.5, 411.5, 1], [426.5, 407.500, .8], [429, 405.5, 1.200], [432, 406, 1], [430, 410.500, 1], [433.500, 410.500, 1], [436, 406.5, 1.5], [439, 407, 1.5], [442, 407.5, 1.5], [445, 409, 1.6], [448, 409.5, 1.4], [438, 412.500, 1], [439, 416, .9], [454, 408, 1.4], [457, 411.500, 1.6], [456, 413, 1], [449, 419, 1.8], [452, 420, 2.2], [453, 422, 1.8], [450.500, 422, 1.500], [429, 428, 1.2], [432, 429, 1.2], [435, 429, 1], [417, 435, 2], [414, 438, 1.2], [412.5, 440, .7], [339, 495, 1.2], [372.500, 469, 1], [373, 471.500, 1], [355, 470, 1.500], [480.5, 445, .8], [526.5, 419, .9], [530.5, 420.5, .9],
  [599.500, 361.500, 2], [602, 361.500, 2.4], [604, 362.500, 1.800], [601.5, 364.5, 1.8], [604, 371, 1.3], [606, 375, 1.4], [590, 369.5, .8], [581, 389.5, .9], [583, 394, .9], [582, 397, .8], [585.5, 396, .9], [587, 394, .8], [590.5, 401, 1.1], [569.5, 414.5, .9], [643.5, 415.5, .7], [646.5, 413, .7], [547, 420.5, .7], [546, 424, 1.1], [587, 381, 1.300],
];
const reds: [number, number, number][] = [[593.5, 386, 2.4], [597, 385, 2], [595, 391.5, 1.6], [611.5, 370.5, 1.2], [527.5, 425.5, 1.5], [549, 427, 1.5], [537, 425, .7], [408.5, 444.5, .7], [473, 438, .8]];

function MapCanvas() {
  return (
    <div className="w-[679px] h-[541px] shrink-0 mt-px border border-[#ababab] border-b-[#b3b3b3] bg-white overflow-hidden">
      <svg width="677" height="538" viewBox="267 159 677 538" fill="none">
        <polygon points={outline} fill="#7d8b8f" stroke="#2b2f30" strokeWidth=".9" />
        <g fill="#becf50" stroke="#2f331c" strokeWidth="2.500" transform="translate(265 185) scale(.33333)">
          <path d="M447 132L550 160L556 180L545 195L545 212L554 228L528 246L500 265L510 278L524 290L515 298L500 305L478 290L472 303L450 318L470 348L450 380L428 390L408 388L405 408L372 436L345 433L320 432L280 413L277 395L292 352L297 245L315 213L393 203L400 182Z" />
          <path d="M155 280L175 280L185 285L192 298L205 292L212 283L222 290L227 300L215 296L218 312L232 314L230 335L226 345L230 362L240 380L235 385L218 362L210 353L190 364L184 362L182 345L192 328L180 326L190 318L172 308L157 308Z" />
          <path d="M331 436L365 439L360 447L371 455L366 463L350 450L335 447Z" />
          <path d="M342 517L390 512L400 525L390 545L380 560L352 570L345 560L350 545Z" />
          <path d="M326 535l14 6l10-2M332 562l12-6l10 4" />
        </g>
        <g fill="#becf50" stroke="#2f331c" strokeWidth="2.500" transform="translate(265 350) scale(.33333)">
          <path d="M342 22L390 16L400 30L390 52L375 72L352 76L348 60L355 55L342 46Z" />
          <path d="M345 62L353 75L350 108L353 120L330 140L313 154L300 145L302 95L325 95L335 70Z" />
          <path d="M326 38l16 8M338 62l14 0M330 24l12 4" />
          <path d="M238 318L258 310L268 314L274 330L286 334L297 332L299 342L290 346L298 355L288 355L276 345L270 328L262 317L245 321Z" />
          <path d="M266 352l6 4l6 10l-8-2zM294 368l8 2l-2 6l-6-2z" />
          <path d="M685 243l12-5l10 12l-8 5l-12-4z" />
          <ellipse cx="673" cy="286" rx="11" ry="7" />
          <ellipse cx="312" cy="195" rx="6" ry="4" /><ellipse cx="473" cy="199" rx="3" ry="3" /><ellipse cx="492" cy="198" rx="3" ry="3" />
        </g>
        <g fill="#becf50" stroke="#2f331c" strokeWidth="2.500" transform="translate(525 270) scale(.33333)">
          <path d="M112 180l10-8l6 2l6 0l-2 12l2 10l-8 2l-6-10z" /><path d="M160 218l20 4l16 8l-6 6l-18-6z" />
          <path d="M58 258l24 6l22 8l-2 8l-18-8z" /><path d="M102 284l14 4l14 16l18 18l-4 6l-20-14z" /><path d="M144 322l16 4l14 8l-6 4z" />
          <path d="M66 298l8-8l38 32l6 14l12 14l-6 4l-12-14l-34-28z" />
          <path d="M180 302l10 6l20 10l0 4l-20-8z" /><path d="M176 316l10 4l18 14l16 6l-2 6l-20-8z" /><path d="M234 350l14 2l10-2l0 8l4 8l-6 2l-8-10l-14-2z" />
          <path d="M166 322l6-6l4 8l-6 4z" /><circle cx="195" cy="435" r="3.500" />
        </g>
        {specks.map(([x, y, r], i) => (
          <path key={i} d={`M${x - r} ${y - r * 0.4}l${r} ${-r * 0.5}l${r} ${r * 0.7}l${-r * 0.5} ${r * 0.9}l${-r * 1.1} ${-r * 0.2}z`} fill={i % 4 === 0 ? "#77783a" : "#3b3528"} stroke="#24251f" strokeWidth=".7" />
        ))}
        {reds.map(([x, y, r], i) => (
          <path key={i} d={`M${x - r} ${y}l${r} ${-r * 0.7}l${r} ${r * 0.7}l${-r} ${r * 0.8}z`} fill="#e73b33" stroke="#4f1f1c" strokeWidth=".6" />
        ))}
        <path d="M283 193.500V678M444.500 193.500V678M605.500 193.500V678M767 193.500V678M928 193.500V678M283 194H928.500M283 355.200H928.500M283 516.300H928.500M283 677.500H928.500" stroke="#222" strokeWidth="1" />
      </svg>
    </div>
  );
}

/* ---------- layer styling ---------- */
const ctl = "border border-[#adadad] rounded-[3px]";
const grad = "bg-linear-to-b from-white to-[#ececec]";
function Spin({ t, w, cls }: { t: string; w: number; cls: string }) {
  return (
    <span className={`flex shrink-0 bg-white overflow-hidden ${ctl} ${cls}`}>
      <span className="flex-1 flex items-center pl-1"><T w={w}>{t}</T></span>
      <span className="w-[14px] border-l border-[#bdbdbd] bg-[#f7f7f7] flex flex-col items-center justify-center gap-[3px]"><Arrow up /><Arrow /></span>
    </span>
  );
}
const SqBtn = ({ children, off = false }: { children: ReactNode; off?: boolean }) => (
  <span className={`w-7 h-6 flex items-center justify-center ${grad} rounded-[3px] border ${off ? "border-[#c9c9c9]" : "border-[#a5a5a5]"}`}>
    <Ic s={16} className={off ? "opacity-35" : ""}>{children}</Ic>
  </span>
);

function StylingDock() {
  return (
    <div className="flex-1 flex min-w-0">
      <div className="w-[6px] shrink-0 flex items-start pt-[264px] pl-[2px]"><VDots /></div>
      <div className="flex-1 flex flex-col min-w-0">
        <DockTitle t="Layer Styling" w={67} />
        <div className={`mt-px ml-[3px] w-[406px] h-[25px] shrink-0 flex items-center pl-[5px] pr-[7px] ${ctl} ${grad}`}>
          <Ic s={17} className="-mt-[2px]"><PolyG /></Ic><span className="w-px" /><T w={113}>builtup_spaces_gridded</T><span className="flex-1" /><Arrow />
        </div>
        <div className="flex mt-[5px] ml-[3px] h-[460px] shrink-0">
          <div className="w-[38px] shrink-0 flex flex-col">
            <div className="h-8 flex items-center justify-center pr-[3px]"><Ic s={22}><path d="M2 6l9-2 5 5-7 5z" fill="#a3c28a" /><path d="M2 10l7-2 5 4-5 5z" fill="#7fb4e0" /><path d="M2 16l6-3 6 4-5 5z" fill="#b8637c" /><path d="M9 13l7-5 5 5-8 10-3-2z" fill="#a9a99a" stroke="#77776a" strokeWidth=".8" /><path d="M17 10l6-8" stroke="#8c8c72" strokeWidth="2.800" /></Ic></div>
            <div className="flex-1 bg-[#5d5d5d] flex flex-col items-center pt-[4px] pr-[8px] gap-[8px]">
              <Ic s={24}><g transform="translate(0 2.500)"><Tag /></g></Ic>
              <Ic s={24}><path d="M12 1l10 5-10 6L2 6z" fill="#f28a8a" stroke="#c11" /><path d="M2 6l10 6v10L2 17z" fill="#8ae234" stroke="#3d7a0e" /><path d="M22 6l-10 6v10l10-5z" fill="#fce94f" stroke="#a88200" /></Ic>
              <Ic s={24}><path d="M8 6H5v11M16 6h3v11M12 9v12" stroke="#c98a35" strokeWidth="2.600" /><rect x="7" y="1" width="10" height="7" fill="#f05a5a" stroke="#a33" /><rect x="1" y="16" width="9" height="6.500" fill="#fce94f" stroke="#a88200" /><rect x="13.500" y="16" width="9" height="6.500" fill="#8ab4e8" stroke="#4a74a8" /></Ic>
              <Ic s={24}><g transform="translate(2 1) scale(.55)"><RedoG /></g><g transform="translate(9 9) scale(.55)"><UndoG /></g></Ic>
            </div>
          </div>
          <div className="ml-[3px] w-[365px] shrink-0 flex flex-col">
            <div className={`h-[25px] shrink-0 flex items-center pl-[6px] pr-[7px] ${ctl} ${grad}`}>
              <svg width="15" height="15" viewBox="0 0 15 15" fill="#1fae5a" stroke="#0c5a32" className="-mt-[2px]"><rect x="1.500" y=".5" width="10" height="3" /><rect x="3.500" y="5.500" width="10" height="3" /><rect x="1.500" y="10.500" width="10" height="3" /></svg>
              <span className="w-[2px]" /><T w={64}>Single symbol</T><span className="flex-1" /><Arrow />
            </div>
            <div className="flex mt-[5px] h-[136px] shrink-0">
              <div className="w-[106px] pl-[20px] pt-[38px]"><div className="w-[61px] h-[61px] border border-[#222] bg-[#e73f36]" /></div>
              <div className="w-[191px] border border-[#b3b3b3] bg-white">
                <div className="h-[18px] bg-[#efefef] flex items-center pl-[6px]"><Arrow /><span className="w-[9px]" /><span className="w-4 h-4 bg-[#a25265] border border-[#5c4a63]" /><span className="w-[6px]" /><T w={15} className="font-bold mt-px">Fill</T></div>
                <div className="h-[18px] flex items-center pl-[43px]"><span className="w-4 h-4 bg-[#e73f36] border border-[#8b2f2a]" /><span className="w-[6px]" /><T w={52} className="mt-[2px]">Simple fill</T></div>
              </div>
              <div className="ml-[6px] mt-[1px] grid grid-cols-[28px_28px] auto-rows-[24px] gap-x-[6px] gap-y-[5px]">
                <SqBtn><path d="M8.500 2.500h7v6h6v7h-6v6h-7v-6h-6v-7h6z" fill="#fff" stroke="#4f8f4f" strokeWidth="1.700" /><path d="M12 5.500v13M5.500 12h13" stroke="#4f8f4f" strokeWidth="2" /></SqBtn>
                <SqBtn off><path d="M2 20L12 4l10 16z" fill="#b5bdc5" stroke="#666" strokeWidth="1.500" /></SqBtn>
                <SqBtn off><rect x="2" y="9" width="20" height="7" stroke="#b88" strokeWidth="1.800" /><path d="M5 12.500h14" stroke="#c88" strokeWidth="2" /></SqBtn>
                <SqBtn off><path d="M2 4l10 16L22 4z" fill="#b5bdc5" stroke="#666" strokeWidth="1.500" /></SqBtn>
                <SqBtn off><path d="M6 2h16v16H6zM6 5H2v17h14v-4" stroke="#777" strokeWidth="1.600" /><rect x="15" y="14" width="8" height="8" fill="#bba" /></SqBtn>
                <SqBtn off><rect x="2" y="11" width="20" height="12" rx="2" fill="#aaa27a" stroke="#888" /><path d="M7 8c0-8 11-8 11 0v3" stroke="#999" strokeWidth="2.500" /></SqBtn>
              </div>
            </div>
            <div className="mt-[6px] h-[2px] shrink-0 bg-white border-t border-[#9d9d9d]" />
            <div className="mt-[7px] h-[220px] shrink-0 flex gap-[9px]">
              <div className="w-[342px] flex flex-col overflow-hidden">
                <div className="flex h-[22px] shrink-0 items-center"><span className="w-[37px]"><T w={19} className="mt-[2px]">Unit</T></span><span className={`flex-1 h-[22px] flex items-center pl-[4px] pr-[7px] ${ctl} ${grad}`}><T w={49} className="mt-[2px]">Millimeters</T><span className="flex-1" /><Arrow /></span></div>
                <div className="mt-px flex h-5 shrink-0 items-center">
                  <span className="w-[38px]"><T w={36} className="mt-[2px]">Opacity</T></span>
                  <span className="w-[188px] h-[5px] shrink-0 rounded-[2px] bg-[#1b86e3] border border-[#1668b5] -mt-[2px]" />
                  <span className="w-[13px] h-[13px] shrink-0 -ml-px rounded-[3px] bg-white border border-[#a5a5a5] -mt-[2px]" />
                  <span className="flex-1" />
                  <Spin t="100.0 %" w={42} cls="w-[100px] h-5" />
                </div>
                <div className="mt-px flex h-[22px] shrink-0 items-center"><span className="w-[37px]"><T w={25} className="mt-[2px]">Color</T></span><span className={`w-[292px] h-[22px] py-[2px] pl-[4px] pr-[3px] ${ctl} ${grad} flex`}><span className="flex-1 rounded-[3px] bg-[#e73f36]" /></span><span className={`flex-1 h-[22px] flex items-center justify-center ${ctl} ${grad}`}><Arrow /></span></div>
                <div className="mt-[67px] h-[2px] shrink-0 bg-white border-t border-[#9d9d9d]" />
                <div className="mt-[5px] flex h-[22px] shrink-0 items-center">
                  <span className={`w-[312px] h-[22px] bg-white flex items-center pl-[8px] ${ctl}`}>
                    <Ic s={15}><circle cx="10" cy="9" r="7" stroke="#8a8a8a" strokeWidth="1.700" /><path d="M15 14l7 8" stroke="#8a8a8a" strokeWidth="2.200" /></Ic>
                    <span className="w-[5px]" /><T w={53} className="mt-px">All Symbols</T><span className="flex-1" />
                    <svg width="13" height="10" viewBox="0 0 13 10"><path d="M4 0h9v10H4L0 5z" fill="#8d8d8d" /><path d="M5.500 2.500l5 5M10.500 2.500l-5 5" stroke="#fff" strokeWidth="1.200" /></svg>
                    <span className="ml-[9px] w-[20px] h-full border-l border-[#bdbdbd] flex items-center justify-center pr-[2px]"><Arrow /></span>
                  </span>
                  <span className="w-[11px]" />
                  <Ic s={16}><SymG /></Ic>
                </div>
                <div className="mt-[5px] h-[53px] shrink-0 border border-b-0 border-[#b3b3b3] bg-white flex">
                  <div className="flex-1 flex pt-[20px] pl-[21px] gap-[37px] overflow-hidden">
                    <span className="w-16 h-[60px] shrink-0 border-2 border-[#222]/80 bg-[radial-gradient(circle_at_0%_0%,#180a86_0%,#6a00a8_28%,#b12a90_50%,#e8705a_75%,#fba437_95%)]" />
                    <span className="w-16 h-[60px] shrink-0 border border-[#8b8b3c] bg-linear-to-b from-[#4d4d4d] to-[#d0d0d0]" />
                    <span className="w-16 h-[60px] shrink-0 border border-[#6c93b0] bg-linear-to-b from-[#2e6b99] via-[#3d8fce] to-[#4aa0e2]" />
                  </div>
                  <div className="w-[14px] shrink-0 border-l border-[#bdbdbd] bg-[#e2e2e2]"><div className="h-[14px] bg-[#fafafa] border-b border-[#bdbdbd] flex items-center justify-center pr-px"><Arrow up /></div><div className="h-[27px] bg-[#fafafa] border-b border-[#bdbdbd]" /></div>
                </div>
              </div>
              <Scroll cls="w-[14px]" thumb="h-[143px]" />
            </div>
            <div className="h-[36px] shrink-0 flex items-center pt-[4px] pl-[4px]"><svg width="8" height="11" viewBox="0 0 8 11"><path d="M.5.500l7 5-7 5z" fill="#444" stroke="#222" /></svg><span className="w-[9px]" /><T w={93} className="font-bold">Layer Rendering</T></div>
            <div className="h-[23px] shrink-0 flex items-center">
              <span className={`w-6 h-[23px] flex items-center justify-center ${ctl} ${grad}`}><Ic s={13}><UndoG /></Ic></span>
              <span className="w-[6px]" />
              <span className={`w-6 h-[23px] flex items-center justify-center ${ctl} ${grad}`}><Ic s={13}><RedoG /></Ic></span>
              <span className="flex-1" /><Check on /><span className="w-1" /><T w={57}>Live update</T><span className="w-[12px]" />
              <span className={`w-[80px] h-[21px] flex items-center justify-center pr-[2px] ${ctl} ${grad}`}><T w={27}>Apply</T></span>
            </div>
          </div>
        </div>
        <div className="mt-[4px] flex items-start h-6 shrink-0">
          <span className="w-[86px] h-[23px] flex items-center justify-center pr-[2px] border border-t-0 border-[#b3b3b3] rounded-b-[3px] bg-[#f7f7f7]"><T w={63} className="mt-px">Layer Styling</T></span>
          <span className="w-[116px] h-[21px] flex items-center justify-center border border-l-0 border-[#b3b3b3] rounded-b-[3px] bg-[#dedede]"><T w={93}>Processing Toolbox</T></span>
          <span className="flex-1 border-t border-[#b3b3b3]" />
        </div>
      </div>
    </div>
  );
}

function StatusBar() {
  return (
    <div className="h-[27px] shrink-0 flex items-center bg-[#f0f0f0]">
      <span className={`ml-px w-[200px] h-[22px] bg-white flex items-center pl-[7px] text-[#7d7d7d] ${ctl}`}>
        <Ic s={15}><circle cx="10" cy="9" r="7" stroke="#8a8a8a" strokeWidth="1.700" /><path d="M15 14l7 8" stroke="#8a8a8a" strokeWidth="2.200" /></Ic>
        <span className="w-[5px]" /><T w={111}>Type to locate (Ctrl+K)</T>
      </span>
      <span className="w-2" /><T w={218}>391 feature(s) selected on layer Intersection.</T>
      <span className="w-[130px]" /><T w={53}>Coordinate</T>
      <span className={`ml-1 w-[98px] h-[22px] bg-white flex items-center pl-[6px] ${ctl}`}><T w={82}>277851,9823212</T></span>
      <span className="w-1" />
      <Ic s={16} className="-mt-[2px]"><g transform="rotate(-40 12 12)" stroke="#444" strokeWidth="1.300"><path d="M5 3c0-4 6-4 6 0v14c0 5-6 5-6 0zM14 6c0-4 6-4 6 0v14c0 4-6 4-6 0z" fill="#ddd" /><path d="M5 9h6M14 11h6M8 1v7M17 4v6" /></g><path d="M17 1l5 5M20 0l3 4M2 18l5 5" stroke="#555" strokeWidth="1.500" /></Ic>
      <span className="w-3" /><T w={25}>Scale</T>
      <span className={`ml-1 w-[81px] h-[22px] bg-white flex items-center pl-[3px] ${ctl}`}><T w={46}>1:703428</T><span className="flex-1" /><span className="w-[19px] h-full border-l border-[#bdbdbd] flex items-center justify-center pr-[2px]"><Arrow /></span></span>
      <span className="w-[12px]" />
      <svg width="12" height="16" viewBox="0 0 12 16" fill="none"><path d="M2.500 8V4.500c0-5 7-5 7 0V8" stroke="#8a8a8a" strokeWidth="1.700" /><rect y="7" width="12" height="8.500" rx="1.500" fill="#5c5c5c" /></svg>
      <span className="w-[8px]" /><T w={44}>Magnifier</T>
      <Spin t="100%" w={29} cls="ml-1 w-[88px] h-[21px]" />
      <span className="w-2" /><T w={41}>Rotation</T>
      <Spin t="0.0 °" w={25} cls="ml-[10px] w-[84px] h-[21px]" />
      <span className="w-[6px]" /><Check on /><span className="w-1" /><T w={35}>Render</T>
      <span className="w-[18px]" />
      <Ic s={15} className="-mt-[2px]"><path d="M0 12C3 5 7 2 12 1c5 1 9 4 12 11-3 7-7 10-12 11C7 22 3 19 0 12z" fill="#8a8a8a" /><path d="M3 7h18M3 17h18M12 1v22M7 3c-3 6-3 12 0 18M17 3c3 6 3 12 0 18" stroke="#d8d8d8" strokeWidth=".9" /><path d="M0 12h24" stroke="#444" strokeWidth="1.300" /></Ic>
      <span className="w-[4px]" /><T w={60}>EPSG:21037</T>
      <span className="w-[19px]" />
      <svg width="16" height="15" viewBox="0 0 16 15" className="mt-[2px]"><path d="M5 0h6c3 0 5 2 5 5s-2 5-4 5l1 4-5-4H5c-3 0-5-2-5-5s2-5 5-5z" fill="#555" /><g fill="#fff"><circle cx="4.500" cy="5" r="1" /><circle cx="8" cy="5" r="1" /><circle cx="11.500" cy="5" r="1" /></g></svg>
    </div>
  );
}

const menu: [string, string, string, number][] = [
  ["Pro", "j", "ect", 37], ["", "E", "dit", 20], ["", "V", "iew", 25], ["", "L", "ayer", 28], ["", "S", "ettings", 42], ["", "P", "lugins", 39], ["Vect", "o", "r", 33], ["", "R", "aster", 32], ["", "D", "atabase", 48], ["", "W", "eb", 24], ["", "M", "esh", 29], ["Pro", "c", "essing", 57], ["", "H", "elp", 25],
];

export default function App() {
  return (
    <div className="w-[1363px] h-[726px] overflow-hidden flex flex-col bg-[#f0f0f0] text-black text-[11px] leading-[14px] font-['Open_Sans','Noto_Sans',sans-serif]">
      <div className="h-[21px] shrink-0 bg-white flex items-center">
        <Ic s={16} className="-mt-[4px] -ml-[1px]"><circle cx="11" cy="12" r="9" stroke="#62a03c" strokeWidth="5" /><path d="M12 12h6l5 6v5h-4l-7-7z" fill="#8cbf4f" /><path d="M10 10l6 1-5 5z" fill="#f08c1e" /></Ic>
        <span className="w-[5px]" />
        <T w={124}>*Untitled Project - QGIS</T>
        <span className="flex-1" />
        <svg width="103" height="12" viewBox="0 0 103 12" fill="none" stroke="#000" className="mr-[18px] -mt-[4px]">
          <path d="M0 6.500h10" /><rect x="45.500" y="3.500" width="7" height="7" /><path d="M47.500 3.500v-2h7v7h-2" /><path d="M91 1.500l10 10M101 1.500l-10 10" />
        </svg>
      </div>
      <div className="h-5 shrink-0 bg-[#efefef] border-b border-[#d4d4d4] flex items-center pl-[7px] gap-[14px]">
        {menu.map(([a, b, c, w]) => (
          <T key={a + b + c} w={w}>{a}<u className="underline-offset-2">{b}</u>{c}</T>
        ))}
      </div>
      <Toolbar1 />
      <Toolbar2 />
      <Toolbar3 />
      <div className="h-[542px] shrink-0 flex">
        <SideBar />
        <div className="w-[212px] shrink-0 flex flex-col">
          <BrowserDock />
          <LayersDock />
        </div>
        <div className="w-[5px] shrink-0 flex items-start pt-[264px]"><VDots /></div>
        <MapCanvas />
        <StylingDock />
      </div>
      <StatusBar />
    </div>
  );
}
